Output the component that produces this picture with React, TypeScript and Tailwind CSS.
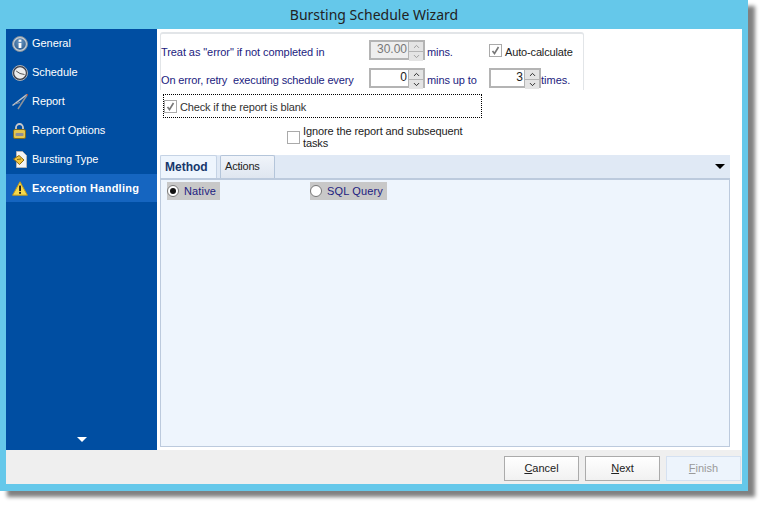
import { ChevronDown, ChevronUp } from "lucide-react";

const font = "font-['Liberation_Sans',Arial,sans-serif]";

const InfoIcon = () => (
  <svg width="16" height="16" viewBox="0 0 16 16">
    <defs>
      <radialGradient id="infoCore" cx="50%" cy="35%" r="65%">
        <stop offset="0%" stopColor="#6f9bc4" />
        <stop offset="100%" stopColor="#2f5f92" />
      </radialGradient>
    </defs>
    <circle cx="8" cy="8" r="7.5" fill="#c3ccd4" stroke="#7f8e9c" />
    <circle cx="8" cy="8" r="5.8" fill="url(#infoCore)" />
    <rect x="6.6" y="7" width="2.8" height="5" fill="#fff" />
    <rect x="6.6" y="3.6" width="2.8" height="2.2" fill="#fff" />
  </svg>
);

const ClockIcon = () => (
  <svg width="16" height="16" viewBox="0 0 16 16">
    <circle cx="8" cy="8" r="7.5" fill="#3c3f4a" stroke="#a9b0b8" />
    <circle cx="8" cy="8" r="5.8" fill="#eceded" />
    <path d="M8 8.5 L4.2 6 M8 8.5 L12.5 9.5" stroke="#555" strokeWidth="1" fill="none" />
  </svg>
);

const CompassIcon = () => (
  <svg width="16" height="16" viewBox="0 0 16 16">
    <path d="M15 0.5 L0.5 11.5" stroke="#c2c7cd" strokeWidth="1.5" fill="none" />
    <path d="M15 1 L6 15" stroke="#8c929a" strokeWidth="1.5" fill="none" />
    <path d="M3 10 L8 8.5" stroke="#8c929a" strokeWidth="1" fill="none" />
    <path d="M14.5 0 L16 0 L15.5 2.5 Z" fill="#b8452c" />
  </svg>
);

const LockIcon = () => (
  <svg width="13" height="16" viewBox="0 0 13 16">
    <path d="M3 7 V4.5 a3.5 3.5 0 0 1 7 0 V7" fill="none" stroke="#c9c9c9" strokeWidth="1.8" />
    <rect x="0.5" y="6.5" width="12" height="9" rx="1.5" fill="#e4c64c" stroke="#7d6c20" />
    <rect x="2.5" y="10" width="8" height="3" rx="1" fill="#8b8f98" />
  </svg>
);

const DocIcon = () => (
  <svg width="14" height="17" viewBox="0 0 14 17">
    <path d="M3.5 0.5 H9.5 L13.5 4.5 V16.5 H3.5 Z" fill="#f4f4f4" stroke="#b5b5b5" />
    <path d="M0.5 8 L6 4.5 L11 9 L6.5 13.5 Z" fill="#f0c53e" stroke="#8a6a10" />
    <path d="M4 8.5 L8 8" stroke="#8a6a10" fill="none" />
  </svg>
);

const WarnIcon = () => (
  <svg width="16" height="15" viewBox="0 0 16 15">
    <path d="M8 0.8 L15.4 14.2 H0.6 Z" fill="#f6d94c" stroke="#c39a1b" strokeLinejoin="round" />
    <rect x="7.1" y="4.6" width="1.9" height="5.4" fill="#222" />
    <rect x="7.1" y="10.9" width="1.9" height="1.9" fill="#222" />
  </svg>
);

const navItems = [
  { label: "General", icon: <InfoIcon /> },
  { label: "Schedule", icon: <ClockIcon /> },
  { label: "Report", icon: <CompassIcon /> },
  { label: "Report Options", icon: <LockIcon /> },
  { label: "Bursting Type", icon: <DocIcon /> },
  { label: "Exception Handling", icon: <WarnIcon />, active: true },
];

function Spinner({ value, width, disabled }: { value: string; width: string; disabled?: boolean }) {
  return (
    <div className={`flex h-[20px] shrink-0 border-2 border-[#b4b4b4] ${width} ${disabled ? "bg-[#eeeeee] text-[#777]" : "bg-white text-[#222]"}`}>
      <div className="flex-1 pr-[1px] text-right text-[12px] leading-[15px]">{value}</div>
      <div className="flex w-[15px] flex-col gap-[1px] bg-[#b4b4b4] pl-[1px]">
        <div className={`flex flex-1 items-center justify-center bg-[#e4e4e4] ${disabled ? "text-[#999]" : "text-[#222]"}`}>
          <ChevronUp size={9} strokeWidth={2.5} />
        </div>
        <div className={`flex flex-1 items-center justify-center bg-[#e4e4e4] ${disabled ? "text-[#999]" : "text-[#222]"}`}>
          <ChevronDown size={9} strokeWidth={2.5} />
        </div>
      </div>
    </div>
  );
}

function Check({ checked }: { checked?: boolean }) {
  return (
    <div className="flex h-[13px] w-[13px] shrink-0 items-center justify-center border border-[#aaa] bg-white">
      {checked && (
        <svg width="9" height="9" viewBox="0 0 9 9">
          <path d="M1.5 5 L3.5 7.5 L7.5 1" stroke="#777" strokeWidth="1.6" fill="none" />
        </svg>
      )}
    </div>
  );
}

function Radio({ label, checked, width, gapRight }: { label: string; checked?: boolean; width: string; gapRight: string }) {
  return (
    <div className={`flex h-[18px] items-center gap-[5px] bg-[#c8c8c8] text-[11px] text-[#1c1c80] ${width} ${gapRight}`}>
      <div className="flex h-[12px] w-[12px] items-center justify-center rounded-full border border-[#777] bg-white">
        {checked && <div className="h-[6px] w-[6px] rounded-full bg-[#111]" />}
      </div>
      <span className="tracking-[0.15px]">{label}</span>
    </div>
  );
}

function WizardButton({ hotkey, rest, disabled }: { hotkey: string; rest: string; disabled?: boolean }) {
  return (
    <div
      className={`flex h-[25px] w-[75px] items-center justify-center border text-[11px] ${
        disabled
          ? "border-[#d5e1f1] bg-[#edf4fc] text-[#9a9a9a]"
          : "border-[#ababab] bg-gradient-to-b from-white to-[#f1f1f1] text-[#222]"
      }`}
    >
      <span className="underline">{hotkey}</span>
      {rest}
    </div>
  );
}

export default function App() {
  return (
    <div className={`h-[506px] w-[763px] overflow-hidden bg-white ${font}`}>
      <div className="flex h-[491px] w-[748px] flex-col bg-[#65c8ea] px-[6px] pb-[7px] shadow-[7px_6px_4px_#808080]">
        <div className="flex h-[29px] shrink-0 items-center justify-center font-['Noto_Sans',sans-serif] text-[14px] text-[#222]">
          Bursting Schedule Wizard
        </div>

        <div className="flex h-[421px] shrink-0">
          {/* Sidebar */}
          <div className="flex w-[151px] shrink-0 flex-col justify-between bg-[#004ea2]">
            <div className="flex flex-col">
              {navItems.map((item) => (
                <div
                  key={item.label}
                  className={`flex items-center text-[11px] text-white ${item.active ? "h-[28px] bg-[#1565c0] font-bold" : "h-[29px]"}`}
                >
                  <div className="flex w-[26px] shrink-0 justify-center pl-[1px]">{item.icon}</div>
                  <span className={item.active ? "tracking-[0.25px]" : "tracking-[-0.05px]"}>{item.label}</span>
                </div>
              ))}
            </div>
            <div className="mb-[8px] ml-[71px] h-0 w-0 border-x-[5px] border-t-[5px] border-x-transparent border-t-white" />
          </div>

          {/* Content */}
          <div className="flex min-w-0 flex-1 flex-col bg-white pl-[3px] pr-[12px] text-[11px]">
            <div className="mt-[3px] h-[58px] w-[424px] shrink-0 rounded-t-[3px] border-x border-t-2 border-[#e2e5e8] pt-[6px] text-[#1c1c80]">
              <div className="flex h-[20px] items-start">
                <span className="mt-[6px] w-[208px] shrink-0 leading-[13px] tracking-[-0.08px]">Treat as "error" if not completed in</span>
                <Spinner value="30.00" width="w-[56px]" disabled />
                <span className="ml-[2px] mt-[6px] w-[62px] shrink-0 leading-[13px] tracking-[-0.1px]">mins.</span>
                <div className="mt-[4px]">
                  <Check checked />
                </div>
                <span className="ml-[3px] mt-[6px] leading-[13px] tracking-[-0.15px] text-[#222]">Auto-calculate</span>
              </div>
              <div className="mt-[8px] flex h-[20px] items-start">
                <span className="mt-[6px] w-[208px] shrink-0 leading-[13px] tracking-[-0.15px]">On error, retry&nbsp; executing schedule every</span>
                <Spinner value="0" width="w-[56px]" />
                <span className="ml-[2px] mt-[6px] w-[62px] shrink-0 leading-[13px] tracking-[-0.1px]">mins up to</span>
                <Spinner value="3" width="w-[52px]" />
                <span className="mt-[6px] leading-[13px]">times.</span>
              </div>
            </div>

            <div className="ml-[3px] mt-[4px] flex h-[24px] w-[319px] shrink-0 items-center gap-[3px] border border-dotted border-black text-[#333]">
              <Check checked />
              <span className="pt-[3px] tracking-[-0.15px]">Check if the report is blank</span>
            </div>

            <div className="ml-[127px] mt-[7px] flex w-[180px] shrink-0 items-center gap-[3px] text-[#222]">
              <Check />
              <span className="leading-[12px] tracking-[-0.1px]">Ignore the report and subsequent tasks</span>
            </div>

            {/* Tabs */}
            <div className="mt-[6px] flex h-[23px] w-[570px] shrink-0 items-start justify-between bg-[#e0e9f5]">
              <div className="flex items-start">
                <div className="flex h-[24px] w-[57px] items-center rounded-t-[2px] border-x border-t border-[#c5d3e5] bg-[#eef5fd] pb-[2px] pl-[4px] text-[12px] font-bold text-[#17376b]">
                  Method
                </div>
                <div className="ml-[3px] flex h-[23px] w-[55px] items-center rounded-t-[2px] border-x border-t border-[#b4c5da] bg-gradient-to-b from-[#f0f4fa] to-[#dfe6f0] pb-[2px] pl-[4px] tracking-[-0.2px] text-[#222]">
                  Actions
                </div>
              </div>
              <div className="mr-[5px] mt-[9px] h-0 w-0 border-x-[5px] border-t-[5px] border-x-transparent border-t-black" />
            </div>
            <div className="flex h-[269px] w-[570px] shrink-0 items-start border border-t-2 border-[#bccadd] bg-[#eef5fd] pl-[6px] pt-[2px]">
              <Radio label="Native" checked width="w-[53px]" gapRight="mr-[90px]" />
              <Radio label="SQL Query" width="w-[77px]" gapRight="" />
            </div>
          </div>
        </div>

        {/* Footer */}
        <div className="flex h-[34px] shrink-0 items-start justify-end gap-[6px] bg-[#efefef] pr-[1px] pt-[6px]">
          <WizardButton hotkey="C" rest="ancel" />
          <WizardButton hotkey="N" rest="ext" />
          <WizardButton hotkey="F" rest="inish" disabled />
        </div>
      </div>
    </div>
  );
}
